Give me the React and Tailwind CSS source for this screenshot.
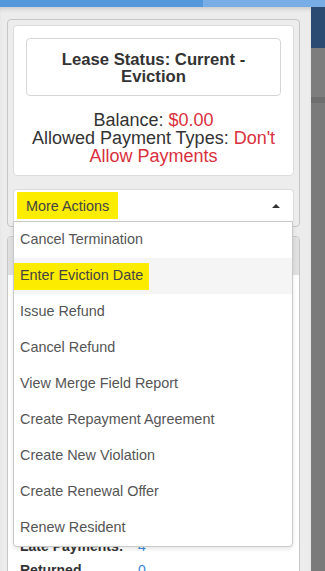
const actions = [
  'Cancel Termination',
  'Enter Eviction Date',
  'Issue Refund',
  'Cancel Refund',
  'View Merge Field Report',
  'Create Repayment Agreement',
  'Create New Violation',
  'Create Renewal Offer',
  'Renew Resident',
];

export default function App() {
  return (
    <div className="relative h-[571px] w-[325px] overflow-hidden bg-[#7a7a7a] font-['Liberation_Sans',Arial,sans-serif]">
      {/* top bar */}
      <div className="flex h-[7px]">
        <div className="w-[203px] bg-[#5597db]" />
        <div className="flex-1 bg-[#79ade6]" />
      </div>
      <div className="flex h-[564px]">
        <div className="w-[311px] bg-[#ececec] pl-[7px] pt-[12px] shadow-[inset_0_4px_4px_-2px_rgba(0,0,0,0.15)]">
          {/* outer card */}
          <div className="relative w-[293px] rounded-[4px] border border-[#c6c6c6] bg-[#ededed] p-[5px] pb-[5px]">
            <div className="rounded-[4px] border border-[#dcdcdc] bg-white px-[12px] pb-[10px] pt-[12px]">
              <div className="rounded-[4px] border border-[#d6d6d6] px-2 pb-[10px] pt-[12px] text-center text-[16.7px] font-bold leading-[17px] text-[#333]">
                Lease Status: Current -
                <br />
                Eviction
              </div>
              <div className="mt-[15px] text-center text-[18px] leading-[18px] text-[#333]">
                <div>
                  Balance: <span className="text-[#d9303d]">$0.00</span>
                </div>
                <div>
                  Allowed Payment Types: <span className="text-[#d9303d]">Don't Allow Payments</span>
                </div>
              </div>
            </div>
            {/* more actions */}
            <div className="mt-[13px] flex h-[32px] items-center justify-between rounded-t-[4px] border border-b-0 border-[#dcdcdc] bg-white pr-[13px]">
              <span className="ml-[3px] flex h-[27px] items-center bg-[#fbec00] px-[9px] pt-[3px] text-[14.4px] text-[#444]">
                More Actions
              </span>
              <span className="h-0 w-0 border-x-[4px] border-b-[4px] border-x-transparent border-b-[#333]" />
            </div>
            {/* dropdown menu */}
            <div className="absolute left-[5px] top-[201px] z-10 w-[280px] rounded-b-[4px] border border-[#c9c9c9] bg-white shadow-[0_2px_4px_rgba(0,0,0,0.1)]">
              {actions.map((a, i) => (
                <div
                  key={a}
                  className={
                    i === 1
                      ? 'flex h-[36px] items-center bg-[#f5f5f5] text-[14.4px] text-[#444]'
                      : 'flex h-[36px] items-center px-[6px] text-[14.4px] text-[#555]'
                  }
                >
                  {i === 1 ? (
                    <span className="flex h-[27px] items-center bg-[#fbec00] px-[6px]">{a}</span>
                  ) : (
                    a
                  )}
                </div>
              ))}
            </div>
          </div>
          {/* second card */}
          <div className="mt-[9px] h-[400px] w-[293px] rounded-[4px] border border-[#c6c6c6] bg-white">
            <div className="h-[38px] rounded-t-[4px] bg-[#e0e0e0]" />
            <div className="pl-[12px] pt-[259px] text-[14px] leading-[24px]">
              <div className="flex">
                <span className="w-[118px] font-bold text-[#333]">Late Payments:</span>
                <span className="text-[#3a87d6]">4</span>
              </div>
              <div className="flex">
                <span className="w-[118px] font-bold text-[#333]">Returned</span>
                <span className="text-[#3a87d6]">0</span>
              </div>
            </div>
          </div>
        </div>
        <div className="flex-1">
          <div className="h-[41px] bg-[#2b4b72]" />
          <div className="h-[49px] bg-[#7d7d7d]" />
          <div className="h-[6px] bg-[#6e6e6e]" />
        </div>
      </div>
    </div>
  );
}
